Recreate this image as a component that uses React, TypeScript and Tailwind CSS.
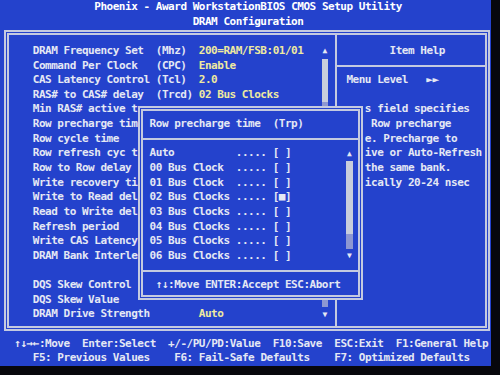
const ROW = "h-[14.65px] leading-[14.65px] whitespace-pre";
const LINE = "bg-[#c4cae0]";

// rows 7..20 sit behind the popup from column 22 on, so only the first 17 chars show
const items: [string, string, string][] = [
  ["DRAM Frequency Set", "(Mhz)", "200=RAM/FSB:01/01"],
  ["Command Per Clock", "(CPC)", "Enable"],
  ["CAS Latency Control", "(Tcl)", "2.0"],
  ["RAS# to CAS# delay", "(Trcd)", "02 Bus Clocks"],
  ["Min RAS# active t", "", ""],
  ["Row precharge tim", "", ""],
  ["Row cycle time", "", ""],
  ["Row refresh cyc t", "", ""],
  ["Row to Row delay", "", ""],
  ["Write recovery ti", "", ""],
  ["Write to Read del", "", ""],
  ["Read to Write del", "", ""],
  ["Refresh period", "", ""],
  ["Write CAS Latency", "", ""],
  ["DRAM Bank Interle", "", ""],
  ["", "", ""],
  ["DQS Skew Control", "", ""],
  ["DQS Skew Value", "", ""],
  ["DRAM Drive Strength", "", "Auto"],
];

// help text; the part left of column 59 is hidden by the popup
const help = [
  "s field specifies",
  " Row precharge",
  "e. Precharge to",
  "ive or Auto-Refresh",
  "the same bank.",
  "ically 20-24 nsec",
];

const options = [
  "Auto          ..... [ ]",
  "00 Bus Clock  ..... [ ]",
  "01 Bus Clock  ..... [ ]",
  "02 Bus Clocks ..... [■]",
  "03 Bus Clocks ..... [ ]",
  "04 Bus Clocks ..... [ ]",
  "05 Bus Clocks ..... [ ]",
  "06 Bus Clocks ..... [ ]",
];

type Bar = "up" | "down" | "thumb" | "track" | "none";

const ScrollCell = ({ kind }: { kind: Bar }) => {
  if (kind === "up" || kind === "down")
    return (
      <div className="w-[6.15px] h-[14.65px] flex items-center justify-center text-[8px] leading-none tracking-normal">
        {kind === "up" ? "▲" : "▼"}
      </div>
    );
  if (kind === "thumb") return <div className="w-[6.15px] h-[14.65px] bg-[#c8cddc]" />;
  if (kind === "track") return <div className="w-[6.15px] h-[14.65px] bg-[#8d97d2]" />;
  return <div className="w-[6.15px] h-[14.65px]" />;
};

const mainBar = (i: number): Bar => {
  if (i === 0) return "up";
  if (i === items.length - 1) return "down";
  if (i <= 3) return "thumb";
  return "track";
};

const popupBar = (i: number): Bar => {
  if (i === 0) return "up";
  if (i === options.length - 1) return "down";
  if (i <= 5) return "thumb";
  return "track";
};

const Separator = () => (
  <div className="h-[14.65px] flex items-center">
    <div className={`h-[2px] w-full ${LINE}`} />
  </div>
);

export default function App() {
  return (
    <div className="w-[500px] h-[375px] bg-[#07070c] overflow-hidden">
      <div
        className="relative w-[491px] h-[366px] bg-[#2442cc] text-[#e4e8f4] text-[11px] font-bold tracking-[-0.47px] flex flex-col"
        style={{ fontFamily: '"DejaVu Sans Mono", "Liberation Mono", monospace' }}
      >
        <div className={`${ROW} pl-[94.25px] text-white`}>Phoenix - Award WorkstationBIOS CMOS Setup Utility</div>
        <div className={`${ROW} pl-[192.65px] text-white`}>DRAM Configuration</div>

        <div className="ml-[3.5px] mt-[1.2px] w-[486px] h-[300.5px] border-[5px] border-double border-[#c4cae0] flex">
          <div className="w-[326.5px] pt-[8.45px] flex flex-col">
            {items.map(([label, unit, value], i) => (
              <div key={i} className="flex h-[14.65px] leading-[14.65px] whitespace-pre">
                <div className="w-[24.25px]" />
                <div className="w-[123px]">{label}</div>
                <div className="w-[43.05px]">{unit}</div>
                <div className="w-[123px] text-[#eeeaa0]">{value}</div>
                <ScrollCell kind={mainBar(i)} />
              </div>
            ))}
          </div>
          <div className={`w-[2px] ${LINE}`} />
          <div className="flex-1 pt-[8.45px] flex flex-col">
            <div className={`${ROW} pl-[52.5px]`}>Item Help</div>
            <div className="h-[14.65px] flex items-center">
              <div className={`h-[2px] w-full ${LINE}`} />
            </div>
            <div className={`${ROW} pl-[9.4px]`}>Menu Level   ►►</div>
            <div className="h-[14.65px]" />
            {help.map((t, i) => (
              <div key={i} className={`${ROW} pl-[27.85px]`}>
                {t}
              </div>
            ))}
          </div>
        </div>

        <div className="mt-[6px]">
          <div className={`${ROW} pl-[14.3px]`}>↑↓→←:Move  Enter:Select  +/-/PU/PD:Value  F10:Save  ESC:Exit  F1:General Help</div>
          <div className={`${ROW} pl-[32.75px]`}>F5: Previous Values    F6: Fail-Safe Defaults    F7: Optimized Defaults</div>
        </div>

        <div className="absolute left-[138px] top-[106px] w-[225px] h-[194px] border-[5px] border-double border-[#c4cae0] bg-[#2442cc] flex flex-col pt-[6.2px]">
          <div className={`${ROW} pl-[6.6px]`}>Row precharge time  (Trp)</div>
          <Separator />
          {options.map((o, i) => (
            <div key={i} className="flex h-[14.65px]">
              <div className="w-[203.4px] pl-[6.6px] leading-[14.65px] whitespace-pre">{o}</div>
              <ScrollCell kind={popupBar(i)} />
            </div>
          ))}
          <Separator />
          <div className={`${ROW} pl-[12.75px]`}>↑↓:Move ENTER:Accept ESC:Abort</div>
        </div>
      </div>
    </div>
  );
}
